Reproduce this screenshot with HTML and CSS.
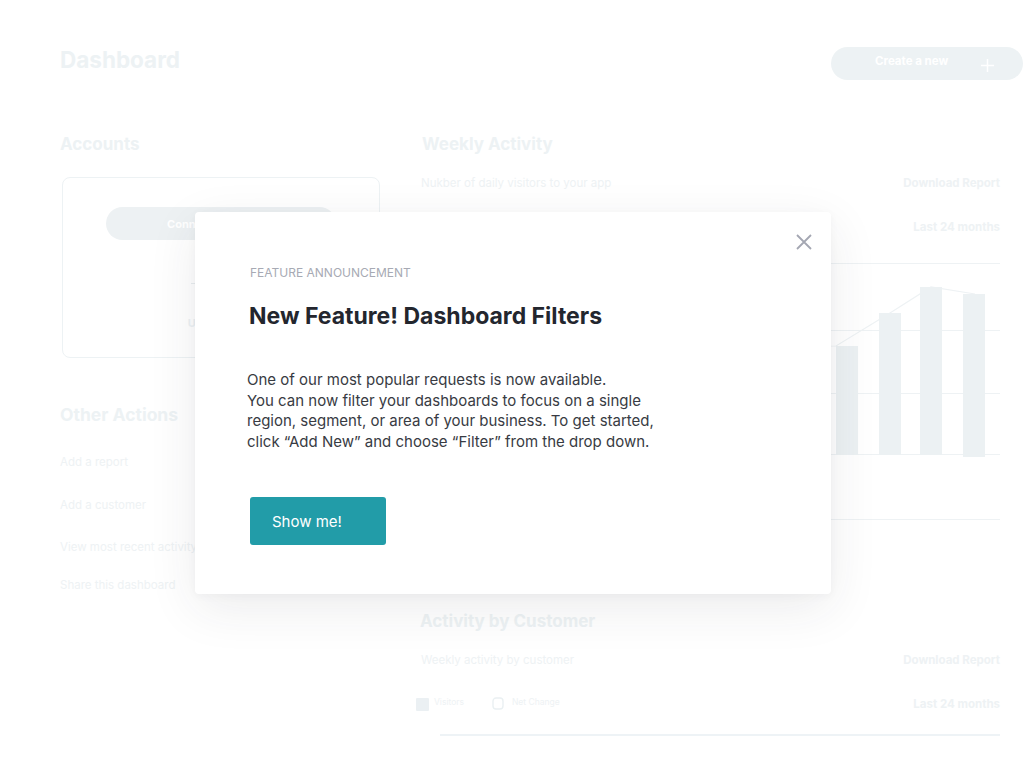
FILE: index.html
```html
<!DOCTYPE html>
<html>
<head>
  <meta charset="UTF-8">
  <meta name="viewport" content="width=device-width, initial-scale=1.0">
  <title>Dashboard</title>
  <link rel="stylesheet" href="styles.css">
</head>
<body>
  <div class="page">
    <header class="top">
      <h1 class="page-title">Dashboard</h1>
      <button class="btn-create">
        <span>Create a new</span>
        <svg class="plus" viewBox="0 0 16 16"><path d="M8 1v14M1 8h14"/></svg>
      </button>
    </header>

    <main class="layout">
      <aside class="side">
        <h2 class="section-title">Accounts</h2>
        <div class="accounts-card">
          <button class="btn-connect">Connect an account</button>
          <div class="or-line"></div>
          <a class="upload">Upload a file</a>
        </div>

        <h2 class="section-title other-title">Other Actions</h2>
        <ul class="actions">
          <li>Add a report</li>
          <li>Add a customer</li>
          <li>View most recent activity</li>
          <li>Share this dashboard</li>
        </ul>
      </aside>

      <section class="content">
        <h2 class="section-title">Weekly Activity</h2>
        <div class="meta-row">
          <span>Nukber of daily visitors to your app</span>
          <b>Download Report</b>
        </div>
        <div class="meta-row meta-range">
          <span></span>
          <b>Last 24 months</b>
        </div>
        <div class="chart">
          <div class="grid-line"></div>
          <div class="grid-line"></div>
          <div class="grid-line"></div>
          <div class="grid-line"></div>
          <div class="grid-line"></div>
          <svg class="bars" viewBox="0 0 580 200" preserveAspectRatio="none">
            <polyline points="0,87 416,83 470,50 511,24 555,31" />
            <rect x="416" y="83" width="22" height="109" />
            <rect x="459" y="50" width="22" height="142" />
            <rect x="500" y="24" width="22" height="168" />
            <rect x="543" y="31" width="22" height="163" />
          </svg>
        </div>

        <h2 class="section-title customer-title">Activity by Customer</h2>
        <div class="meta-row">
          <span>Weekly activity by customer</span>
          <b>Download Report</b>
        </div>
        <div class="meta-row legend-row">
          <div class="legend">
            <span class="swatch"></span><small>Visitors</small>
            <svg class="loop" viewBox="0 0 16 14"><path d="M3 4a3 3 0 0 1 3-3h4a3 3 0 0 1 3 3v5a3 3 0 0 1-3 3H6a3 3 0 0 1-3-3z"/></svg><small>Net Change</small>
          </div>
          <b>Last 24 months</b>
        </div>
        <div class="bottom-line"></div>
      </section>
    </main>
  </div>

  <div class="modal" role="dialog">
    <button class="close" aria-label="Close">
      <svg viewBox="0 0 16 16"><path d="M1 1l14 14M15 1L1 15"/></svg>
    </button>
    <p class="eyebrow">FEATURE ANNOUNCEMENT</p>
    <h2 class="modal-title">New Feature! Dashboard Filters</h2>
    <p class="modal-text">One of our most popular requests is now available.<br>
      You can now filter your dashboards to focus on a single region, segment, or area of your business. To get started, click “Add New” and choose “Filter” from the drop down.</p>
    <button class="btn-show">Show me!</button>
  </div>
</body>
</html>
```

FILE: styles.css
```css
* {
  box-sizing: border-box;
}
body {
  margin: 0;
  background: #fff;
  font-family: Inter, "Open Sans", sans-serif;
  color: #eef2f4;
}
h1, h2, p, ul {
  margin: 0;
  padding: 0;
}
button {
  font-family: inherit;
  border: 0;
  cursor: pointer;
}

/* faded dashboard behind the modal */
.page {
  padding: 41px 1px 0 60px;
}
.top {
  display: flex;
  justify-content: space-between;
  align-items: center;
}
.page-title {
  font-size: 22.5px;
  font-weight: 700;
  color: #edf2f4;
  margin-top: -2px;
}
.btn-create {
  display: flex;
  align-items: center;
  gap: 32px;
  height: 33px;
  width: 192px;
  margin-top: 6px;
  padding: 0 0 0 44px;
  border-radius: 17px;
  background: #edf2f4;
  color: #fff;
  font-size: 11.5px;
  font-weight: 700;
}
.btn-create span {
  margin-top: -6px;
}
.plus {
  width: 15px;
  height: 15px;
  margin-top: 3px;
  stroke: #fff;
  stroke-width: 1.6;
  fill: none;
}
.layout {
  display: grid;
  grid-template-columns: 320px 580px;
  column-gap: 40px;
  margin-top: 52px;
}
.section-title {
  font-size: 17px;
  font-weight: 700;
  color: #edf2f4;
  line-height: 24px;
}
.other-title {
  font-size: 17.5px;
}
.accounts-card {
  margin: 21px 0 0 2px;
  height: 181px;
  border: 1px solid #edf2f4;
  border-radius: 8px;
  display: flex;
  flex-direction: column;
  align-items: center;
  padding-top: 29px;
}
.btn-connect {
  width: 230px;
  height: 33px;
  border-radius: 17px;
  background: #edf1f3;
  color: #fff;
  font-size: 11px;
  font-weight: 700;
}
.or-line {
  width: 60px;
  height: 1px;
  background: #e9eef0;
  margin-top: 43px;
}
.upload {
  margin-top: 32px;
  font-size: 11px;
  font-weight: 700;
  color: #edf2f4;
}
.other-title {
  margin-top: 45px;
}
.actions {
  list-style: none;
  font-size: 11.5px;
  color: #eef2f4;
}
.actions li {
  line-height: 16px;
}
.actions li:nth-child(1) { margin-top: 27px; }
.actions li:nth-child(2) { margin-top: 27px; }
.actions li:nth-child(3) { margin-top: 26px; }
.actions li:nth-child(4) { margin-top: 22px; }

.content {
  display: flex;
  flex-direction: column;
}
.content .section-title {
  padding-left: 2px;
}
.meta-row {
  display: flex;
  justify-content: space-between;
  align-items: center;
  font-size: 11.5px;
  height: 16px;
  margin-top: 19px;
  padding-left: 1px;
}
.meta-row b {
  font-weight: 700;
  color: #eef2f4;
}
.meta-range {
  margin-top: 28px;
}
.chart {
  position: relative;
  margin-top: 28px;
  height: 257px;
}
.grid-line {
  height: 1px;
  background: #eef2f4;
}
.grid-line:nth-child(2) { margin-top: 66px; }
.grid-line:nth-child(3) { margin-top: 62px; }
.grid-line:nth-child(4) { margin-top: 60px; }
.grid-line:nth-child(5) { margin-top: 64px; }
.bars {
  position: absolute;
  left: 0;
  top: 0;
  width: 580px;
  height: 200px;
}
.bars rect {
  fill: #ecf1f3;
}
.bars polyline {
  fill: none;
  stroke: #eef2f4;
  stroke-width: 1.2;
}
.customer-title {
  margin-top: 89px;
  margin-left: -2px;
}
.legend-row {
  margin-top: 28px;
  margin-left: -5px;
}
.legend {
  display: flex;
  align-items: center;
}
.legend small {
  font-size: 8.5px;
  color: #eef2f4;
  margin-top: -4px;
}
.swatch {
  width: 13px;
  height: 13px;
  background: #ebf0f3;
  border-radius: 1px;
  margin-right: 5px;
}
.loop {
  width: 16px;
  height: 14px;
  margin: 0 6px 0 26px;
  fill: none;
  stroke: #eaf0f2;
  stroke-width: 1.4;
}
.bottom-line {
  height: 2px;
  background: #eef3f6;
  margin: 22px 0 0 20px;
}

/* announcement modal */
.modal {
  position: absolute;
  left: 195px;
  top: 212px;
  width: 636px;
  height: 382px;
  background: #fff;
  border-radius: 4px;
  box-shadow: 0 14px 50px rgba(40, 44, 52, 0.09), 0 2px 8px rgba(40, 44, 52, 0.04);
  padding: 53px 0 0 55px;
  color: #23262e;
}
.close {
  position: absolute;
  top: 22px;
  right: 18px;
  width: 18px;
  height: 18px;
  padding: 0;
  background: none;
}
.close svg {
  width: 16px;
  height: 16px;
  stroke: #a4a7b2;
  stroke-width: 1.8;
  fill: none;
}
.eyebrow {
  font-size: 12px;
  color: #a7aab4;
  line-height: 16px;
}
.modal-title {
  font-size: 23px;
  font-weight: 700;
  line-height: 28px;
  margin-top: 21px;
  margin-left: -1px;
}
.modal-text {
  width: 420px;
  margin: 40px 0 0 -3px;
  font-size: 15px;
  line-height: 20.5px;
  color: #383b43;
}
.btn-show {
  display: block;
  width: 136px;
  height: 48px;
  margin-top: 45px;
  padding: 0 0 0 22px;
  text-align: left;
  border-radius: 3px;
  background: #229ca8;
  color: #fff;
  font-size: 15px;
}
```
